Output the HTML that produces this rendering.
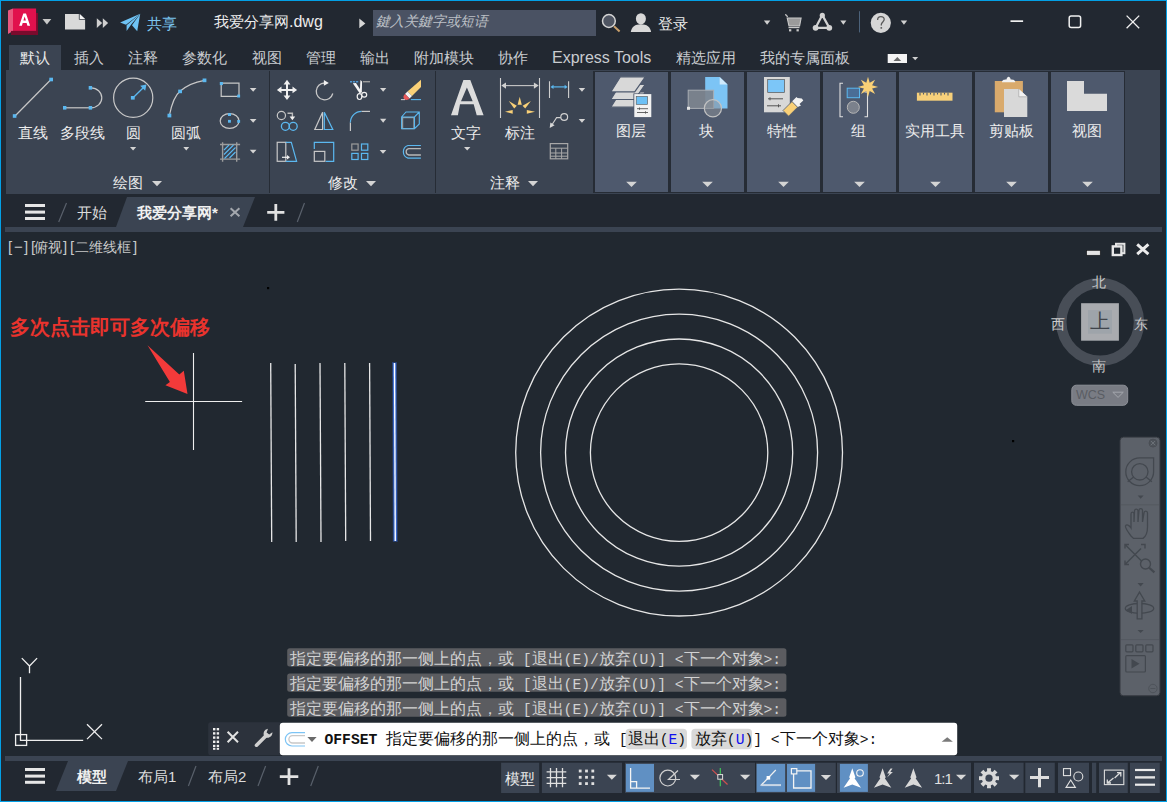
<!DOCTYPE html>
<html><head><meta charset="utf-8">
<style>
*{margin:0;padding:0;box-sizing:border-box}
html,body{width:1167px;height:802px;overflow:hidden}
body{position:relative;background:#222831;font-family:"Liberation Sans",sans-serif;color:#e6e6e6}
.a{position:absolute}
.t{position:absolute;white-space:nowrap;line-height:1}
svg{position:absolute;overflow:visible}
.m{font-family:"Liberation Mono",monospace;font-size:14.67px}
</style></head><body>

<!-- ===== Title bar ===== -->
<div class="t" style="left:214px;top:14px;font-size:15px;color:#ececec;width:108.8px;text-align:justify;text-align-last:justify">我爱分享网<span style="font-size:16px">.dwg</span></div>
<div class="a" style="left:373px;top:10px;width:223px;height:26px;background:#4a5263"></div>
<div class="t" style="left:376px;top:14px;font-size:14px;color:#bcc0c6;font-style:italic;width:112.0px;text-align:justify;text-align-last:justify">鍵入关鍵字或短语</div>
<div class="t" style="left:147px;top:16px;font-size:15px;color:#7cc6f0;width:30.0px;text-align:justify;text-align-last:justify">共享</div>
<div class="t" style="left:658px;top:16px;font-size:15px;color:#ececec;width:30.0px;text-align:justify;text-align-last:justify">登录</div>

<!-- title icons -->
<svg style="left:0;top:0" width="1167" height="45">
  <polygon points="8,10.5 13,8.5 13,31 8,34" fill="#e9587f"/>
  <polygon points="11.2,31 37.9,31 37.9,13 36.1,13 36.1,31 11.2,31 11.2,35 37.9,35" fill="#7a0b2d"/>
  <rect x="11.2" y="30.9" width="26.7" height="4" fill="#7a0b2d"/>
  <rect x="36" y="13" width="1.9" height="22" fill="#7a0b2d"/>
  <rect x="13" y="8.5" width="23.1" height="22.4" fill="#e1114d"/>
  <path d="M19.2,25.7 L23.3,13.5 L26,13.5 L30.1,25.7 L27.4,25.7 L26.6,23 L22.7,23 L21.9,25.7 Z M23.4,20.6 L25.9,20.6 L24.65,16.6 Z" fill="#fff"/>
  <polygon points="42.5,19 51.3,19 46.9,24.4" fill="#c8c8c8"/>
  <path d="M65,14 L79.3,14 L85.1,19.5 L85.1,29.5 L65,29.5 Z" fill="#d9d9d9"/>
  <path d="M79.8,14 L85.1,19 L79.8,19 Z" fill="#f4f4f4"/>
  <path d="M79.3,14 L79.3,19.5 L85.1,19.5" fill="none" stroke="#3a3f48" stroke-width="0.8"/>
  <polygon points="96.8,18.2 102.2,23.1 96.8,28" fill="#cfcfcf"/>
  <polygon points="102.8,18.2 108.1,23.1 102.8,28" fill="#cfcfcf"/>
  <path d="M140.2,13.8 L120.1,22.6 L126,24.8 Z" fill="#6ec3f5"/>
  <path d="M140.2,13.8 L126.6,25.2 L126.6,31 L131.2,24.6 Z" fill="#6ec3f5"/>
  <path d="M140.2,13.8 L132,25.2 L137.2,31.2 Z" fill="#6ec3f5"/>
  <polygon points="359.3,18.5 365.4,23.4 359.3,28.3" fill="#d6d6d6"/>
  <circle cx="608.9" cy="21" r="6.4" fill="#4f5562" stroke="#d4d4d4" stroke-width="1.5"/>
  <line x1="614" y1="26.2" x2="619.6" y2="31.4" stroke="#c9a06c" stroke-width="2"/>
  <ellipse cx="640.9" cy="18.8" rx="5" ry="5.6" fill="#d8d8d8"/>
  <path d="M630.8,32 C631.5,27 635,24.3 640.9,24.3 C646.8,24.3 650.4,27 651.1,32 Z" fill="#d8d8d8"/>
  <polygon points="763.9,20.6 770.3,20.6 767.1,24.7" fill="#d0d0d0"/>
  <path d="M785,14.6 C786.2,14.6 787,15.4 787.5,17" fill="none" stroke="#c9c9c9" stroke-width="1.3"/>
  <path d="M787.2,18 L801.1,18 L799.6,26 L789,26 Z" fill="#9b9b9b" stroke="#c9c9c9" stroke-width="1.1"/>
  <line x1="788.5" y1="27.6" x2="799.5" y2="27.6" stroke="#c9c9c9" stroke-width="1.2"/>
  <rect x="789" y="29.2" width="2.3" height="2.2" fill="#c9c9c9"/>
  <rect x="796.5" y="29.2" width="2.3" height="2.2" fill="#c9c9c9"/>
  <path d="M822.3,15.1 L815.5,27.9 L829.4,27.9 Z" fill="none" stroke="#d2d2d2" stroke-width="2.2" stroke-linejoin="round"/>
  <circle cx="822.3" cy="15.4" r="2.6" fill="#d2d2d2"/>
  <circle cx="815.6" cy="27.8" r="2.9" fill="#d2d2d2"/>
  <circle cx="829.3" cy="27.8" r="2.9" fill="#d2d2d2"/>
  <polygon points="840.3,20.6 846.4,20.6 843.35,24.7" fill="#d0d0d0"/>
  <rect x="859" y="11.2" width="1" height="21.2" fill="#4c627a"/>
  <circle cx="880.8" cy="22.8" r="10.1" fill="#d6d6d6"/>
  <path d="M877.6,20.1 C877.6,17.8 879,16.6 880.9,16.6 C882.9,16.6 884.2,17.8 884.2,19.6 C884.2,21.7 881.3,22.3 881.3,24.6 L881.3,25.4" fill="none" stroke="#5a5a5a" stroke-width="1.3"/>
  <rect x="880.5" y="27.1" width="1.6" height="1.6" fill="#5a5a5a"/>
  <polygon points="900.7,20.6 907.2,20.6 903.95,24.7" fill="#d0d0d0"/>
  <rect x="1010.5" y="20.3" width="12.6" height="1.7" fill="#f0f0f0"/>
  <rect x="1069.2" y="16" width="11.4" height="11.5" rx="2" fill="none" stroke="#f0f0f0" stroke-width="1.5"/>
  <path d="M1126.6,15.6 L1139.2,28.2 M1139.2,15.6 L1126.6,28.2" stroke="#f0f0f0" stroke-width="1.3"/>
</svg>

<!-- ===== Ribbon tabs ===== -->
<div class="a" style="left:9px;top:45px;width:52px;height:25px;background:#3b4452"></div>
<div class="t" style="left:20px;top:50px;font-size:15px;color:#e8e8e8;width:30.0px;text-align:justify;text-align-last:justify">默认</div>
<div class="t" style="left:74px;top:50px;font-size:15px;color:#c9ccd0;width:30.0px;text-align:justify;text-align-last:justify">插入</div>
<div class="t" style="left:128px;top:50px;font-size:15px;color:#c9ccd0;width:30.0px;text-align:justify;text-align-last:justify">注释</div>
<div class="t" style="left:182px;top:50px;font-size:15px;color:#c9ccd0;width:45.0px;text-align:justify;text-align-last:justify">参数化</div>
<div class="t" style="left:252px;top:50px;font-size:15px;color:#c9ccd0;width:30.0px;text-align:justify;text-align-last:justify">视图</div>
<div class="t" style="left:306px;top:50px;font-size:15px;color:#c9ccd0;width:30.0px;text-align:justify;text-align-last:justify">管理</div>
<div class="t" style="left:360px;top:50px;font-size:15px;color:#c9ccd0;width:30.0px;text-align:justify;text-align-last:justify">输出</div>
<div class="t" style="left:414px;top:50px;font-size:15px;color:#c9ccd0;width:60.0px;text-align:justify;text-align-last:justify">附加模块</div>
<div class="t" style="left:498px;top:50px;font-size:15px;color:#c9ccd0;width:30.0px;text-align:justify;text-align-last:justify">协作</div>
<div class="t" style="left:552px;top:50px;font-size:16px;color:#c9ccd0">Express Tools</div>
<div class="t" style="left:676px;top:50px;font-size:15px;color:#c9ccd0;width:60.0px;text-align:justify;text-align-last:justify">精选应用</div>
<div class="t" style="left:760px;top:50px;font-size:15px;color:#c9ccd0;width:90.0px;text-align:justify;text-align-last:justify">我的专属面板</div>

<!-- ===== Ribbon panel ===== -->
<div class="a" style="left:6px;top:70px;width:1154px;height:124px;background:#3b4452"></div>
<div class="a" style="left:269px;top:71px;width:1px;height:122px;background:#262c35"></div>
<div class="a" style="left:435px;top:71px;width:1px;height:122px;background:#262c35"></div>
<div class="a" style="left:593px;top:71px;width:532px;height:122px;background:#262c35"></div>
<div class="a" style="left:595px;top:72px;width:73px;height:120px;background:#4e596d"></div>
<div class="a" style="left:671px;top:72px;width:73px;height:120px;background:#4e596d"></div>
<div class="a" style="left:747px;top:72px;width:73px;height:120px;background:#4e596d"></div>
<div class="a" style="left:823px;top:72px;width:73px;height:120px;background:#4e596d"></div>
<div class="a" style="left:899px;top:72px;width:73px;height:120px;background:#4e596d"></div>
<div class="a" style="left:975px;top:72px;width:73px;height:120px;background:#4e596d"></div>
<div class="a" style="left:1051px;top:72px;width:73px;height:120px;background:#4e596d"></div>

<!-- panel labels -->
<div class="t" style="left:18px;top:125px;font-size:15px;color:#ececec;width:30.0px;text-align:justify;text-align-last:justify">直线</div>
<div class="t" style="left:60px;top:125px;font-size:15px;color:#ececec;width:45.0px;text-align:justify;text-align-last:justify">多段线</div>
<div class="t" style="left:126px;top:125px;font-size:15px;color:#ececec;width:15.0px;text-align:center">圆</div>
<div class="t" style="left:171px;top:125px;font-size:15px;color:#ececec;width:30.0px;text-align:justify;text-align-last:justify">圆弧</div>
<div class="t" style="left:113px;top:175px;font-size:15px;color:#ececec;width:30.0px;text-align:justify;text-align-last:justify">绘图</div>
<div class="t" style="left:328px;top:175px;font-size:15px;color:#ececec;width:30.0px;text-align:justify;text-align-last:justify">修改</div>
<div class="t" style="left:451px;top:125px;font-size:15px;color:#ececec;width:30.0px;text-align:justify;text-align-last:justify">文字</div>
<div class="t" style="left:505px;top:125px;font-size:15px;color:#ececec;width:30.0px;text-align:justify;text-align-last:justify">标注</div>
<div class="t" style="left:490px;top:175px;font-size:15px;color:#ececec;width:30.0px;text-align:justify;text-align-last:justify">注释</div>
<div class="t" style="left:616px;top:123px;font-size:15px;color:#ececec;width:30.0px;text-align:justify;text-align-last:justify">图层</div>
<div class="t" style="left:699px;top:123px;font-size:15px;color:#ececec;width:15.0px;text-align:center">块</div>
<div class="t" style="left:767px;top:123px;font-size:15px;color:#ececec;width:30.0px;text-align:justify;text-align-last:justify">特性</div>
<div class="t" style="left:851px;top:123px;font-size:15px;color:#ececec;width:15.0px;text-align:center">组</div>
<div class="t" style="left:905px;top:123px;font-size:15px;color:#ececec;width:60.0px;text-align:justify;text-align-last:justify">实用工具</div>
<div class="t" style="left:989px;top:123px;font-size:15px;color:#ececec;width:45.0px;text-align:justify;text-align-last:justify">剪贴板</div>
<div class="t" style="left:1072px;top:123px;font-size:15px;color:#ececec;width:30.0px;text-align:justify;text-align-last:justify">视图</div>

<!-- ribbon icons -->
<svg style="left:0;top:0" width="1167" height="200">
  <!-- tab icon -->
  <rect x="887.7" y="54" width="19.3" height="9" fill="#f4f4f4"/>
  <polygon points="893.5,61 901.2,61 897.35,57" fill="#6a6a6a"/>
  <polygon points="912.2,57 918.2,57 915.2,60.3" fill="#d0d0d0"/>
  <!-- line -->
  <line x1="15" y1="116" x2="51" y2="79.5" stroke="#c8c8c8" stroke-width="1.2"/>
  <rect x="12.8" y="114.2" width="3.6" height="3.6" fill="#5bb8f0"/>
  <rect x="49.3" y="77.7" width="3.7" height="3.6" fill="#5bb8f0"/>
  <!-- polyline -->
  <line x1="65" y1="107.8" x2="90" y2="107.8" stroke="#c8c8c8" stroke-width="1.2"/>
  <path d="M91,87.8 A10.8,10 0 0 1 91,107.8" fill="none" stroke="#c8c8c8" stroke-width="1.2"/>
  <rect x="63" y="106" width="3.4" height="3.6" fill="#5bb8f0"/>
  <rect x="88.7" y="106" width="3.4" height="3.6" fill="#5bb8f0"/>
  <rect x="88.7" y="86" width="3.4" height="3.6" fill="#5bb8f0"/>
  <!-- circle -->
  <circle cx="133.2" cy="97.8" r="19.6" fill="none" stroke="#c8c8c8" stroke-width="1.2"/>
  <line x1="133" y1="97.8" x2="143.5" y2="87.5" stroke="#5bb8f0" stroke-width="1.3"/>
  <polygon points="146.4,84.6 145.2,90.8 140.2,85.8" fill="#5bb8f0"/>
  <rect x="130.9" y="96" width="3.8" height="3.6" fill="#5bb8f0"/>
  <!-- arc -->
  <path d="M169.4,115.5 Q173,97 180,91.3 Q189,83 204.5,80.3" fill="none" stroke="#c8c8c8" stroke-width="1.2"/>
  <rect x="167.5" y="113.7" width="3.8" height="3.7" fill="#5bb8f0"/>
  <rect x="178.2" y="89.6" width="3.8" height="3.6" fill="#5bb8f0"/>
  <rect x="202.6" y="78.5" width="3.8" height="3.7" fill="#5bb8f0"/>
  <!-- rect -->
  <path d="M221.2,83.2 L239,83.2 L239,96.4 L221.2,96.4 Z" fill="none" stroke="#c8c8c8" stroke-width="1.2"/>
  <rect x="219.8" y="82" width="3.1" height="3.1" fill="#5bb8f0"/>
  <rect x="237.2" y="94.6" width="2.9" height="2.9" fill="#5bb8f0"/>
  <polygon points="249.8,88 256.5,88 253.15,91.8" fill="#d4d4d4"/>
  <!-- ellipse -->
  <ellipse cx="229.6" cy="121" rx="9.4" ry="7.3" fill="none" stroke="#c8c8c8" stroke-width="1.2"/>
  <rect x="228" y="119.9" width="2.9" height="2.8" fill="#5bb8f0"/>
  <rect x="228" y="113.2" width="3" height="2.8" fill="#5bb8f0"/>
  <rect x="237.2" y="120" width="2.9" height="2.8" fill="#5bb8f0"/>
  <polygon points="249.8,119 256.5,119 253.15,122.7" fill="#d4d4d4"/>
  <!-- hatch -->
  <path d="M222.6,142.2 V161.7 M236.7,142.2 V161.7 M220,144.5 H240.1 M220,159.1 H240.1" stroke="#9c9c9c" stroke-width="1.4"/>
  <path d="M224,150 L229,145 M224,154.5 L233.5,145 M224.5,158.5 L235.5,147.5 M229.5,158 L235.5,152" stroke="#5bb8f0" stroke-width="1.1"/>
  <polygon points="249.8,149.7 256.5,149.7 253.15,153.4" fill="#d4d4d4"/>
  <!-- draw labels dropdowns -->
  <polygon points="130,147 136.2,147 133.1,150.4" fill="#d4d4d4"/>
  <polygon points="183.3,147 189.2,147 186.25,150.4" fill="#d4d4d4"/>
  <polygon points="152,181 162,181 157.0,186.3" fill="#d4d4d4"/>
  <!-- modify: move -->
  <path d="M287,79.8 L290.4,84.4 L288,84.4 L288,88.9 L292.5,88.9 L292.5,86.5 L297.1,89.9 L292.5,93.3 L292.5,90.9 L288,90.9 L288,95.4 L290.4,95.4 L287,100 L283.6,95.4 L286,95.4 L286,90.9 L281.5,90.9 L281.5,93.3 L276.9,89.9 L281.5,86.5 L281.5,88.9 L286,88.9 L286,84.4 L283.6,84.4 Z" fill="#f0f0f0"/>
  <!-- rotate -->
  <path d="M324.5,83 A8.4,8.4 0 1 0 332.8,93.5" fill="none" stroke="#c8c8c8" stroke-width="1.3"/>
  <polygon points="323.9,80 328.8,83 323.9,85.8" fill="#f0f0f0"/>
  <!-- trim -->
  <path d="M350,81.7 H359" stroke="#4d95cf" stroke-width="1.4" stroke-dasharray="2.2,0.8"/>
  <path d="M363,81.7 H370" stroke="#9c9c9c" stroke-width="1.4"/>
  <path d="M352.8,83.2 L356,83 L361.6,91.8 L359.8,93.6 Z" fill="#f4f4f4"/><path d="M360.4,80 L362.1,81.6 L361.8,92.6 L359.8,92.4 Z" fill="#f4f4f4"/>
  <ellipse cx="359.5" cy="96.6" rx="2.3" ry="2.9" fill="none" stroke="#f0f0f0" stroke-width="1.2"/>
  <ellipse cx="364.2" cy="94.8" rx="2.5" ry="2.4" fill="none" stroke="#f0f0f0" stroke-width="1.2"/>
  <polygon points="380,88 386.3,88 383.15,91.8" fill="#d4d4d4"/>
  <!-- erase -->
  <path d="M421,79.8 L421,87 L412,96 L407.5,91.5 Z" fill="#f9d077"/>
  <path d="M407.5,91.5 L412,96 L409.5,98.5 L405,94 Z" fill="#f4f4f4"/>
  <path d="M405,94 L409.5,98.5 C408,100.3 405.5,100.3 404.3,99 C403,97.7 403.2,95.5 405,94 Z" fill="#ec5a5a"/>
  <path d="M400.9,99.6 H405.1" stroke="#c8c8c8" stroke-width="1.1"/>
  <path d="M410.9,99.6 H421" stroke="#5bb8f0" stroke-width="1.1"/>
  <!-- copy -->
  <circle cx="281.4" cy="115.5" r="4.1" fill="none" stroke="#c8c8c8" stroke-width="1.2"/>
  <path d="M287.5,113.2 H292.4 V117" fill="none" stroke="#bcbcbc" stroke-width="1.4"/>
  <polygon points="289.6,116.5 295.2,116.5 292.4,120.3" fill="#f0f0f0"/>
  <circle cx="285.4" cy="126.3" r="4" fill="none" stroke="#5bb8f0" stroke-width="1.3"/>
  <circle cx="293.2" cy="126.3" r="4" fill="none" stroke="#5bb8f0" stroke-width="1.3"/>
  <!-- mirror -->
  <path d="M322.6,112.3 L322.6,129.5 L314.8,129.5 Z" fill="none" stroke="#c8c8c8" stroke-width="1.2"/>
  <path d="M324.3,112.3 L324.3,129.5 L332.8,129.5 Z" fill="none" stroke="#5bb8f0" stroke-width="1.2"/>
  <!-- fillet -->
  <path d="M350.4,131 V122.6" stroke="#c8c8c8" stroke-width="1.2"/>
  <path d="M350.4,122.6 A11.2,11.2 0 0 1 361.6,111.4" fill="none" stroke="#5bb8f0" stroke-width="1.2"/>
  <path d="M361.6,111.4 H370" stroke="#c8c8c8" stroke-width="1.2"/>
  <polygon points="380,118.7 386.3,118.7 383.15,122.7" fill="#d4d4d4"/>
  <!-- 3d box -->
  <rect x="402.6" y="117.6" width="11.3" height="11" fill="none" stroke="#9c9c9c" stroke-width="1.2"/>
  <path d="M401.6,128.7 V117 L406,112 H419.3 V124 L414.5,128.7 Z M401.6,117 H414.5 L419.3,112 M414.5,117 V128.7" fill="none" stroke="#5bb8f0" stroke-width="1.1"/>
  <!-- stretch -->
  <rect x="277.2" y="142.3" width="8.6" height="19" fill="none" stroke="#c8c8c8" stroke-width="1.2"/>
  <path d="M285.8,142.3 H291.3 L296.6,161.3 H285.8" fill="none" stroke="#5bb8f0" stroke-width="1.2"/>
  <path d="M282,157.3 H287.5" stroke="#f0f0f0" stroke-width="1.2"/>
  <polygon points="287,155 290,157.3 287,159.6" fill="#f0f0f0"/>
  <!-- scale -->
  <path d="M314.3,149 V142.3 H333.7 V161.3 H325.6" fill="none" stroke="#5bb8f0" stroke-width="1.2"/>
  <rect x="314.3" y="151.4" width="10.5" height="9.9" fill="none" stroke="#c8c8c8" stroke-width="1.2"/>
  <!-- array -->
  <rect x="351.8" y="144" width="6.3" height="6.2" fill="none" stroke="#9c9c9c" stroke-width="1.2"/>
  <rect x="361.5" y="144" width="6.3" height="6.2" fill="none" stroke="#5bb8f0" stroke-width="1.2"/>
  <rect x="351.8" y="153.4" width="6.3" height="6.1" fill="none" stroke="#5bb8f0" stroke-width="1.2"/>
  <rect x="361.5" y="153.4" width="6.3" height="6.1" fill="none" stroke="#5bb8f0" stroke-width="1.2"/>
  <polygon points="379.7,150.1 386.3,150.1 383.0,153.8" fill="#d4d4d4"/>
  <!-- offset -->
  <path d="M420.9,145.5 H408 A6.6,6.6 0 0 0 408,158.1 H420.9" fill="none" stroke="#5bb8f0" stroke-width="1.2"/>
  <path d="M420.9,148.7 H408.8 A3.2,3.2 0 0 0 408.8,155 H420.9" fill="none" stroke="#b8b8b8" stroke-width="1.3"/>
  <polygon points="366,181 376,181 371.0,186.3" fill="#d4d4d4"/>
  <!-- annotation: A -->
  <path d="M451,115.3 L463.4,80 L470.3,80 L483.6,115.3 L476.7,115.3 L473.7,104.2 L460,104.2 L457.9,115.3 Z M461,101.3 L472.7,101.3 L466.9,87.6 Z" fill="#dcdcdc" fill-rule="evenodd"/>
  <polygon points="464,147 470.4,147 467.2,150.4" fill="#d4d4d4"/>
  <!-- dimension -->
  <path d="M500.5,77.9 V118.1 M539.5,77.9 V118.1" stroke="#d0d0d0" stroke-width="1.1"/>
  <path d="M505,85.6 H535" stroke="#c8c8c8" stroke-width="1.1"/>
  <polygon points="501.3,85.6 506,82.6 506,88.8" fill="#d0d0d0"/>
  <polygon points="538.7,85.6 533.9,82.6 533.9,88.8" fill="#d0d0d0"/>
  <polygon points="519.7,96.8 521.8,104.8 517.6,104.8" fill="#f9d077"/>
  <polygon points="508.8,101 516.8,105.8 514.2,108.4" fill="#f9d077"/>
  <polygon points="530.9,101 525.2,108.4 522.6,105.8" fill="#f9d077"/>
  <polygon points="505,111.8 512.7,109.9 512.7,113.8" fill="#f9d077"/>
  <polygon points="535,111.8 526.8,109.9 526.8,113.8" fill="#f9d077"/>
  <!-- linear -->
  <path d="M549.5,81.3 V98.1 M568.6,81.3 V98.1" stroke="#d0d0d0" stroke-width="1.1"/>
  <path d="M552.5,86.9 H565.6" stroke="#5bb8f0" stroke-width="1.2"/>
  <polygon points="550.5,86.9 553.5,84.8 553.5,89" fill="#5bb8f0"/>
  <polygon points="567.6,86.9 564.6,84.8 564.6,89" fill="#5bb8f0"/>
  <polygon points="578.7,88 585.2,88 581.95,91.7" fill="#d4d4d4"/>
  <!-- leader -->
  <circle cx="564.2" cy="117" r="3.4" fill="none" stroke="#d0d0d0" stroke-width="1.2"/>
  <path d="M560.8,117.6 H556.6 L551.8,125" fill="none" stroke="#d0d0d0" stroke-width="1.1"/>
  <polygon points="549.7,128 550.4,122.5 554.6,125.3" fill="#d8d8d8"/>
  <polygon points="578.7,118.9 585.2,118.9 581.95,122.8" fill="#d4d4d4"/>
  <!-- table -->
  <rect x="550.3" y="143.6" width="17.4" height="15.2" fill="none" stroke="#a8a8a8" stroke-width="1.2"/>
  <path d="M550.3,148.2 H567.7 M550.3,153 H567.7 M550.3,156.2 H567.7 M555.8,148.2 V158.8 M561.6,148.2 V158.8" stroke="#a8a8a8" stroke-width="1"/>
  <polygon points="528,181 538,181 533.0,186.3" fill="#d4d4d4"/>
  <!-- layers -->
  <polygon points="610.8,107.2 620.4,92 645.3,92 634.7,107.2" fill="#d8d8d8" stroke="#4e596d" stroke-width="1.2"/>
  <polygon points="610.8,99.5 620.4,84.3 645.3,84.3 634.7,99.5" fill="#d8d8d8" stroke="#4e596d" stroke-width="1.2"/>
  <polygon points="610.8,91.9 620.4,76.8 645.3,76.8 634.7,91.9" fill="#d8d8d8" stroke="#4e596d" stroke-width="1.2"/>
  <rect x="633.4" y="93.4" width="18.3" height="24" fill="#4e596d"/>
  <rect x="634.3" y="94.1" width="17" height="23" fill="#f2f2f2"/>
  <rect x="636.2" y="96.4" width="11.4" height="8" fill="#6cc0f5" stroke="#555" stroke-width="0.6"/>
  <path d="M637,108.7 H648 M637,112.5 H648 M639.5,107.5 V109.8 M645.5,111.3 V113.6" stroke="#555" stroke-width="0.9"/>
  <!-- block -->
  <path d="M705.2,76.9 H719.7 L727.5,84.5 V108.4 H705.2 Z" fill="#7cc4f5"/>
  <path d="M719.7,76.9 V84.5 H727.5 Z" fill="#cfe9fb"/>
  <rect x="688.2" y="90.2" width="25.4" height="18.2" fill="#7d848f" fill-opacity="0.92" stroke="#a9adb3" stroke-width="1"/>
  <circle cx="712.9" cy="108.3" r="8.6" fill="#8a8f98" fill-opacity="0.55" stroke="#c2c2c2" stroke-width="1.2"/>
  <rect x="687" y="106.8" width="3" height="3" fill="#e6e6e6"/>
  <!-- properties -->
  <rect x="764" y="77" width="25.8" height="35.3" fill="#d8d8d8"/>
  <rect x="767.7" y="79.6" width="16.7" height="12.8" fill="#7cc6f8" stroke="#555" stroke-width="0.7"/>
  <path d="M768,98.8 H783 M767,105.8 H781 M770,97.3 V100.3 M778.5,104.3 V107.3" stroke="#555" stroke-width="1"/>
  <path d="M783,110.5 L792,101.5 L797.6,107.2 L788.6,116.2 Z" fill="#f9d077" stroke="#4e596d" stroke-width="0.8"/>
  <path d="M792.2,101.3 L796.5,97 L797.5,98 L801.8,98.6 L803.3,100.4 L799.5,104 L801,105.5 L797.8,107 Z" fill="#f2f2f2"/>
  <!-- group -->
  <path d="M843,83.2 H840 V116.7 H843 M864.5,92 H867.5 V116.7 H864.5" fill="none" stroke="#e0e0e0" stroke-width="1.1"/>
  <rect x="847.2" y="88.2" width="12.3" height="9.5" fill="#4a6d96" stroke="#5bb8f0" stroke-width="1"/>
  <circle cx="853.3" cy="107.3" r="6" fill="#7b818c" stroke="#b5b5b5" stroke-width="1"/>
  <polygon points="868,76.8 869.7,82.8 875.1,79.8 872.1,85.2 878.1,86.9 872.1,88.6 875.1,94 869.7,91 868,97 866.3,91 860.9,94 863.9,88.6 857.9,86.9 863.9,85.2 860.9,79.8 866.3,82.8" fill="#f9d077"/>
  <!-- ruler -->
  <rect x="916.9" y="92.7" width="35.6" height="8" fill="#f7d07a"/>
  <path d="M920,92.7 V95.6 M923.5,92.7 V94.6 M927,92.7 V95.6 M930.5,92.7 V94.6 M934,92.7 V95.6 M937.5,92.7 V94.6 M941,92.7 V95.6 M944.5,92.7 V94.6 M948,92.7 V95.6" stroke="#4e596d" stroke-width="1.1"/>
  <!-- clipboard -->
  <rect x="994.8" y="81" width="28.1" height="31.3" fill="#d9aa6c"/>
  <path d="M1002,82.3 C1002,79.5 1005,79.5 1006.5,79.5 C1006.8,77.5 1007.8,76.7 1008.6,76.7 C1009.4,76.7 1010.4,77.5 1010.7,79.5 C1012.2,79.5 1015.2,79.5 1015.2,82.3 Z" fill="#f2f2f2"/>
  <path d="M1004,89 H1018.8 L1027.3,96.8 V117.1 H1004 Z" fill="#d8d8d8" stroke="#4e596d" stroke-width="0"/>
  <path d="M1018.8,89 V96.8 H1027.3 Z" fill="#f2f2f2"/>
  <path d="M1018.8,89 V96.8 H1027.3" fill="none" stroke="#9a9a9a" stroke-width="0.6"/>
  <!-- view L -->
  <path d="M1067,81.1 H1084 V93.8 H1107 V110.9 H1067 Z" fill="#dadada"/>
  <!-- large button dropdowns -->
  <polygon points="626.2,181.7 636.8,181.7 631.5,187.1" fill="#d4d4d4"/>
  <polygon points="702.2,181.7 712.8,181.7 707.5,187.1" fill="#d4d4d4"/>
  <polygon points="778.2,181.7 788.8,181.7 783.5,187.1" fill="#d4d4d4"/>
  <polygon points="854.2,181.7 864.8,181.7 859.5,187.1" fill="#d4d4d4"/>
  <polygon points="930.2,181.7 940.8,181.7 935.5,187.1" fill="#d4d4d4"/>
  <polygon points="1006.2,181.7 1016.8,181.7 1011.5,187.1" fill="#d4d4d4"/>
  <polygon points="1082.2,181.7 1092.8,181.7 1087.5,187.1" fill="#d4d4d4"/>
</svg>

<!-- ===== File tab bar ===== -->
<svg style="left:0;top:0" width="1167" height="802">
  <polygon points="116,227 127,197 255,197 243,227" fill="#3b4452"/>
</svg>
<div class="t" style="left:77px;top:205px;font-size:15px;color:#dcdcdc;width:30.0px;text-align:justify;text-align-last:justify">开始</div>
<div class="t" style="left:137px;top:205px;font-size:15px;color:#f0f0f0;font-weight:bold;width:80.85px;text-align:justify;text-align-last:justify">我爱分享网*</div>
<div class="a" style="left:5px;top:227px;width:1157px;height:5px;background:#3b4452"></div>

<!-- ===== Drawing area ===== -->
<div class="a" style="left:1px;top:232px;width:1165px;height:524px;background:#212830"></div>
<div class="t" style="left:8px;top:239px;font-size:15px;color:#c8c8c8">[</div><div class="t" style="left:14px;top:239px;font-size:15px;color:#c8c8c8">−</div><div class="t" style="left:24px;top:239px;font-size:15px;color:#c8c8c8">]</div><div class="t" style="left:31px;top:239px;font-size:15px;color:#c8c8c8">[</div><div class="t" style="left:34px;top:240px;font-size:14px;color:#c8c8c8;width:28.0px;text-align:justify;text-align-last:justify">俯视</div><div class="t" style="left:63px;top:239px;font-size:15px;color:#c8c8c8">]</div><div class="t" style="left:70px;top:239px;font-size:15px;color:#c8c8c8">[</div><div class="t" style="left:75px;top:240px;font-size:14px;color:#c8c8c8;width:56.0px;text-align:justify;text-align-last:justify">二维线框</div><div class="t" style="left:133px;top:239px;font-size:15px;color:#c8c8c8">]</div>
<div class="t" style="left:10px;top:317px;font-size:20px;color:#e9332d;font-weight:900;width:200.0px;text-align:justify;text-align-last:justify">多次点击即可多次偏移</div>

<!-- drawing svg -->
<svg style="left:0;top:0" width="1167" height="802">
  <!-- file tab bar icons -->
  <rect x="25" y="204" width="20" height="3" fill="#e6e6e6"/>
  <rect x="25" y="210.6" width="20" height="3" fill="#e6e6e6"/>
  <rect x="25" y="217" width="20" height="3" fill="#e6e6e6"/>
  <line x1="66.5" y1="203" x2="58.7" y2="222" stroke="#5a616c" stroke-width="1.2"/>
  <path d="M230.6,208.2 L239.4,216.2 M239.4,208.2 L230.6,216.2" stroke="#a3a7ad" stroke-width="2"/>
  <path d="M267.2,212.4 H284.4 M275.8,204 V220.8" stroke="#e2e2e2" stroke-width="2.8"/>
  <line x1="304.5" y1="203" x2="297.3" y2="222" stroke="#5a616c" stroke-width="1.2"/>
  <!-- viewport controls -->
  <rect x="1086.7" y="250.5" width="13.5" height="4.7" fill="#e4e4e4" stroke="#111" stroke-width="0.5"/>
  <rect x="1116" y="243.8" width="8.4" height="9.4" fill="none" stroke="#e4e4e4" stroke-width="2"/>
  <rect x="1112.8" y="246.4" width="8.6" height="8.6" fill="#212830" stroke="#e8e8e8" stroke-width="2.4"/>
  <path d="M1137.2,244.4 L1148.4,254.1 M1148.4,244.4 L1137.2,254.1" stroke="#ececec" stroke-width="3"/>
  <!-- dots -->
  <rect x="267" y="287" width="2.2" height="2.2" fill="#000"/>
  <rect x="1012" y="440" width="2.2" height="2.2" fill="#000"/>
  <!-- arrow -->
  <polygon points="147.5,345.2 179.3,374.4 183.8,370.7 187.5,393.9 165.4,385.3 169.9,381.9" fill="#f23a3a"/>
  <!-- crosshair -->
  <path d="M193.5,353 V450 M145.2,401.5 H242.1" stroke="#eeeeee" stroke-width="1.1"/>
  <!-- lines -->
  <g stroke="#e6e6e6" stroke-width="1.3">
    <line x1="270.7" y1="363" x2="271.7" y2="542"/>
    <line x1="295.2" y1="364" x2="296.2" y2="542"/>
    <line x1="320" y1="363" x2="321" y2="542"/>
    <line x1="344.8" y1="363" x2="345.7" y2="541"/>
    <line x1="369.6" y1="363" x2="370.5" y2="541"/>
  </g>
  <line x1="394.5" y1="362" x2="395.3" y2="542" stroke="#2a4f9c" stroke-width="5" stroke-opacity="0.6"/><line x1="394.5" y1="363" x2="395.3" y2="541" stroke="#3f6fd4" stroke-width="3.2"/>
  <line x1="394.5" y1="363" x2="395.3" y2="541" stroke="#ffffff" stroke-width="1.3"/>
  <!-- circles -->
  <g fill="none" stroke="#e6e6e6" stroke-width="1.3">
    <circle cx="679.1" cy="452.6" r="88.7"/>
    <circle cx="679.1" cy="452.6" r="113.6"/>
    <circle cx="679.1" cy="452.6" r="138.5"/>
    <circle cx="679.1" cy="452.6" r="163.4"/>
  </g>
  <!-- compass -->
  <circle cx="1100.15" cy="322" r="38.8" fill="none" stroke="#484e57" stroke-width="10.4"/>
  <rect x="1081.1" y="303.2" width="37.8" height="37.5" fill="#a9abaf"/>
  <rect x="1088" y="310.1" width="24" height="23.6" fill="#9ea4aa"/>
  <rect x="1071.8" y="385.2" width="55.9" height="20.1" rx="4.5" fill="#797c84" stroke="#8e9198" stroke-width="1"/>
  <polygon points="1112.8,392.2 1123.3,392.2 1118.05,397.4" fill="none" stroke="#a4a7ad" stroke-width="1"/>
  <!-- nav bar -->
  <rect x="1120" y="437.1" width="40" height="258.7" rx="3.5" fill="#5c6169" stroke="#353940" stroke-width="1"/>
  <circle cx="1153" cy="443.1" r="4" fill="#4e535a" stroke="#474b52" stroke-width="0.8"/>
  <path d="M1150.8,440.9 L1155.2,445.3 M1155.2,440.9 L1150.8,445.3" stroke="#6e737a" stroke-width="1"/>
  <path d="M1139.9,457.9 H1153.6 V471.8 A13.9,13.9 0 1 1 1139.9,457.9 Z" fill="none" stroke="#43484f" stroke-width="1.3"/>
  <circle cx="1139.8" cy="471.8" r="8.2" fill="none" stroke="#43484f" stroke-width="1.3"/>
  <path d="M1133.6,477 L1127.7,481.8 M1146,477 L1151.9,481.8" stroke="#43484f" stroke-width="1.3"/>
  <polygon points="1137.7,495.4 1143.6,495.4 1140.65,498.8" fill="#43484f"/>
  <line x1="1121" y1="504.8" x2="1159" y2="504.8" stroke="#545960" stroke-width="1"/>
  <path d="M1131,536 C1128,532 1125,528 1125.5,526 C1126.5,524 1129,525 1131,528 L1131,514 C1131,511.5 1134,511.5 1134,514 L1134,522 L1134.5,511 C1134.5,508.5 1138,508.5 1138,511 L1138,522 L1139,510.5 C1139,508 1142.5,508 1142.5,510.5 L1142.5,522 L1144,513 C1144,510.5 1147.5,510.5 1147.5,513 L1147.5,527 C1147.5,533 1145,537 1143,538.4 L1133.5,538.4 Z" fill="none" stroke="#43484f" stroke-width="1.3"/>
  <path d="M1125,544.5 L1145,564.5 M1125,564.5 L1141,548.5 M1141,544.5 L1145,544.5 L1145,548.5 M1125,560.5 L1125,564.5 L1129,564.5 M1125,548.5 L1125,544.5 L1129,544.5" fill="none" stroke="#43484f" stroke-width="1.4"/>
  <circle cx="1145.5" cy="564" r="5" fill="#5c6169" stroke="#43484f" stroke-width="1.4"/>
  <line x1="1149.2" y1="567.7" x2="1154.4" y2="572.4" stroke="#43484f" stroke-width="2.2"/>
  <polygon points="1137.5,583 1143.7,583 1140.6,586.5" fill="#43484f"/>
  <ellipse cx="1139.5" cy="608.4" rx="14.2" ry="4.9" fill="none" stroke="#43484f" stroke-width="1.3"/>
  <path d="M1137.2,618.9 V601 H1134.3 L1139.5,592.1 L1144.8,601 H1141.9 V618.9 Z" fill="#5c6169" stroke="#43484f" stroke-width="1.3"/>
  <polygon points="1126,610 1132,606 1132,614" fill="#43484f"/>
  <polygon points="1137.5,629.9 1143.7,629.9 1140.6,633.1" fill="#43484f"/>
  <line x1="1121" y1="639.6" x2="1159" y2="639.6" stroke="#545960" stroke-width="1"/>
  <rect x="1125.8" y="644.8" width="7.2" height="7" rx="1" fill="none" stroke="#43484f" stroke-width="1.2"/>
  <rect x="1135.8" y="644.8" width="7.2" height="7" rx="1" fill="none" stroke="#43484f" stroke-width="1.2"/>
  <rect x="1145.8" y="644.8" width="7.2" height="7" rx="1" fill="none" stroke="#43484f" stroke-width="1.2"/>
  <rect x="1125.8" y="655.6" width="19.6" height="16.4" rx="1" fill="none" stroke="#43484f" stroke-width="1.2"/>
  <polygon points="1131.5,659 1131.5,668.5 1139.5,663.75" fill="#43484f"/>
  <circle cx="1152.9" cy="688.5" r="4.2" fill="none" stroke="#4e535a" stroke-width="1"/>
  <path d="M1150.4,688.5 H1155.4" stroke="#4e535a" stroke-width="1"/>
  <!-- UCS -->
  <g stroke="#eeeeee" stroke-width="1.3" fill="none">
    <path d="M21.8,658.1 L29.5,666 L37.1,658.1 M29.5,666 V673.2"/>
    <path d="M20.5,677.1 V740.4 H83.2"/>
    <rect x="15.6" y="734.6" width="11" height="10.8"/>
    <path d="M87,724.2 L102,739.1 M102,724.2 L87,739.1"/>
  </g>
  <!-- command history boxes -->
  <rect x="287.2" y="648.2" width="499.2" height="18.4" rx="2.5" fill="#5b5c60"/>
  <rect x="287.2" y="673.4" width="499.2" height="18.4" rx="2.5" fill="#5b5c60"/>
  <rect x="287.2" y="698.3" width="499.2" height="18.4" rx="2.5" fill="#5b5c60"/>
  <!-- command line -->
  <rect x="208.2" y="722.2" width="75" height="33" rx="2.5" fill="#2c323c"/>
  <rect x="279.8" y="722.8" width="677.4" height="32.4" rx="3" fill="#ffffff"/>
  <g fill="#eeeeee">
    <rect x="213" y="728" width="2.4" height="2.4"/><rect x="216.7" y="728" width="2.4" height="2.4"/>
    <rect x="213" y="732.2" width="2.4" height="2.4"/><rect x="216.7" y="732.2" width="2.4" height="2.4"/>
    <rect x="213" y="736.4" width="2.4" height="2.4"/><rect x="216.7" y="736.4" width="2.4" height="2.4"/>
    <rect x="213" y="740.6" width="2.4" height="2.4"/><rect x="216.7" y="740.6" width="2.4" height="2.4"/>
    <rect x="213" y="744.8" width="2.4" height="2.4"/><rect x="216.7" y="744.8" width="2.4" height="2.4"/>
    <rect x="213" y="748" width="2.4" height="1.8"/><rect x="216.7" y="748" width="2.4" height="1.8"/>
  </g>
  <path d="M227.6,731.8 L238,742.2 M238,731.8 L227.6,742.2" stroke="#e2e2e2" stroke-width="2"/>
  <path d="M256.5,745.2 L266.5,735.2" stroke="#d0d0d0" stroke-width="3.6" stroke-linecap="round"/>
  <path d="M264.5,737 C262.5,733.5 264,729.5 268,728.8 L266.6,732.6 L269.2,734.6 L272.4,732.2 C272.6,736 269.2,738.6 266,737.4 Z" fill="#d0d0d0"/>
  <path d="M305,732.6 H292 A6.7,6.7 0 0 0 292,746 H305" fill="none" stroke="#7cc4f5" stroke-width="1.2"/>
  <path d="M305,735.6 H292.6 A3.7,3.7 0 0 0 292.6,743 H305" fill="none" stroke="#c8c8c8" stroke-width="1.3"/>
  <polygon points="307.4,737 316.6,737 312.0,742" fill="#6a6a6a"/>
  <rect x="625.6" y="728.7" width="61.4" height="20.6" rx="4" fill="#d9d9d9"/>
  <rect x="691.4" y="728.7" width="60.6" height="20.6" rx="4" fill="#d9d9d9"/>
  <polygon points="941.6,741.7 952.9,741.7 947.25,737.3" fill="#7a7a7a"/>
</svg>
<div class="t" style="left:1092px;top:275px;font-size:14px;color:#cacaca;width:14.0px;text-align:center">北</div>
<div class="t" style="left:1051px;top:317px;font-size:14px;color:#cacaca;width:14.0px;text-align:center">西</div>
<div class="t" style="left:1134px;top:317px;font-size:14px;color:#cacaca;width:14.0px;text-align:center">东</div>
<div class="t" style="left:1092px;top:359px;font-size:14px;color:#cacaca;width:14.0px;text-align:center">南</div>
<div class="t" style="left:1090px;top:311px;font-size:20px;color:#40454c;width:20.0px;text-align:center">上</div>
<div class="t" style="left:1076px;top:389px;font-size:12.5px;color:#5a5d63">WCS</div>

<!-- ===== Status bar ===== -->
<div class="a" style="left:5px;top:756px;width:1157px;height:5px;background:#3b4452"></div>
<!-- status bar -->
<svg style="left:0;top:0" width="1167" height="802">
  <rect x="25" y="768" width="20" height="3" fill="#e6e6e6"/>
  <rect x="25" y="774.6" width="20" height="3" fill="#e6e6e6"/>
  <rect x="25" y="780.8" width="20" height="3" fill="#e6e6e6"/>
  <polygon points="56,791 68,761 128,761 116,791" fill="#3b4452"/>
  <g stroke="#59606b" stroke-width="1.2">
    <line x1="196" y1="766" x2="188.4" y2="786"/>
    <line x1="265.6" y1="766" x2="258" y2="786"/>
    <line x1="318.3" y1="766" x2="310.7" y2="786"/>
  </g>
  <path d="M279.8,776.6 H298.3 M289,768.2 V785" stroke="#e2e2e2" stroke-width="2.8"/>
  <!-- boxes -->
  <g fill="#3b4452">
    <rect x="501.1" y="762.7" width="38.1" height="30.3"/>
    <rect x="541.9" y="762.7" width="80.1" height="30.3"/>
    <rect x="625" y="762.7" width="130" height="30.3"/>
    <rect x="756.1" y="762.7" width="79.7" height="30.3"/>
    <rect x="837" y="762.7" width="134" height="30.3"/>
    <rect x="974" y="762.7" width="49.6" height="30.3"/>
    <rect x="1025.3" y="762.7" width="29.5" height="30.3"/>
    <rect x="1058" y="762.7" width="31" height="30.3"/>
    <rect x="1092" y="762.7" width="4.2" height="30.3"/>
    <rect x="1099" y="762.7" width="28.8" height="30.3"/>
    <rect x="1130" y="762.7" width="29.8" height="30.3"/>
  </g>
  <g fill="#6090c3">
    <rect x="625.9" y="763.9" width="28.1" height="28"/>
    <rect x="756.6" y="763.9" width="28.5" height="28"/>
    <rect x="787" y="763.9" width="28.1" height="28"/>
    <rect x="839.9" y="763.9" width="28" height="28"/>
  </g>
  <!-- grid -->
  <path d="M550.5,767.9 V787.2 M556.5,767.9 V787.2 M562.5,767.9 V787.2 M546.6,771.8 H566.3 M546.6,777.6 H566.3 M546.6,783.4 H566.3" stroke="#e0e0e0" stroke-width="1.3"/>
  <g fill="#e0e0e0">
    <rect x="578.8" y="769.6" width="2.8" height="2.8"/><rect x="585.1" y="769.6" width="2.8" height="2.8"/><rect x="591.4" y="769.6" width="2.8" height="2.8"/>
    <rect x="578.8" y="775.9" width="2.8" height="2.8"/><rect x="585.1" y="775.9" width="2.8" height="2.8"/><rect x="591.4" y="775.9" width="2.8" height="2.8"/>
    <rect x="578.8" y="782.2" width="2.8" height="2.8"/><rect x="585.1" y="782.2" width="2.8" height="2.8"/><rect x="591.4" y="782.2" width="2.8" height="2.8"/>
  </g>
  <polygon points="606.9,774.7 616.8,774.7 611.8499999999999,779.8" fill="#d8d8d8"/>
  <!-- ortho -->
  <path d="M630.6,768 V788.2 H650 M630.6,781.6 H636.6 V788.2" fill="none" stroke="#f4f4f4" stroke-width="1.3"/>
  <!-- polar -->
  <circle cx="667.8" cy="778.1" r="7.9" fill="none" stroke="#d0d0d0" stroke-width="1.2"/>
  <path d="M678,770.5 L668.5,779.5 H680" fill="none" stroke="#d0d0d0" stroke-width="1.2"/>
  <polygon points="689.8,774.7 700,774.7 694.9,779.8" fill="#d8d8d8"/>
  <!-- otrack -->
  <line x1="720.3" y1="767.9" x2="720.3" y2="786.2" stroke="#3fc45a" stroke-width="1.2"/>
  <line x1="712" y1="769.6" x2="727.5" y2="784.5" stroke="#d05050" stroke-width="1.2"/>
  <rect x="717.8" y="774.6" width="4.8" height="4.6" fill="#3b4452" stroke="#e0e0e0" stroke-width="1"/>
  <polygon points="740,774.7 750.3,774.7 745.15,779.8" fill="#d8d8d8"/>
  <!-- osnap -->
  <path d="M775.8,770 L761.3,785 H781" fill="none" stroke="#f0f0f0" stroke-width="1.2"/>
  <path d="M761.3,785.2 H781" stroke="#c8d6e6" stroke-width="1.8"/>
  <rect x="766.6" y="776" width="3.6" height="3.6" fill="#fff"/>
  <path d="M796.8,770.8 H811 V788 H793.6 V773.9" fill="none" stroke="#f4f4f4" stroke-width="1.3"/>
  <rect x="791.4" y="768.6" width="5.4" height="5.3" fill="none" stroke="#f4f4f4" stroke-width="1.2"/>
  <polygon points="820.8,775 831.1,775 825.95,780.1" fill="#d8d8d8"/>
  <!-- annotation -->
  <polygon points="852.3,768.2 855.4,777.2 854.6,778.6 856.1,780.6 861.0,787.8 852.3,784.4 843.6,787.8 848.5,780.6 850.0,778.6 849.2,777.2" fill="#ffffff"/>
  <circle cx="860" cy="773" r="3.3" fill="none" stroke="#f4f4f4" stroke-width="1.1"/>
  <polygon points="882.6,768.2 885.7,777.2 884.9,778.6 886.4,780.6 891.3,787.8 882.6,784.4 873.9,787.8 878.8,780.6 880.3,778.6 879.5,777.2" fill="#d9d9d9"/>
  <polygon points="890.5,768.6 887.2,773.6 889.6,773.6 887,777.4 892.9,772 890.3,772 892.5,768.6" fill="#d9d9d9"/>
  <polygon points="913.4,768.2 916.5,777.2 915.7,778.6 917.2,780.6 922.1,787.8 913.4,784.4 904.7,787.8 909.6,780.6 911.1,778.6 910.3,777.2" fill="#d9d9d9"/>
  <polygon points="956,774.7 966.2,774.7 961.1,779.8" fill="#d8d8d8"/>
  <polygon points="995.96,776.35 999.00,776.17 999.00,780.23 995.96,780.05 995.23,781.81 997.50,783.84 994.64,786.70 992.61,784.43 990.85,785.16 991.03,788.20 986.97,788.20 987.15,785.16 985.39,784.43 983.36,786.70 980.50,783.84 982.77,781.81 982.04,780.05 979.00,780.23 979.00,776.17 982.04,776.35 982.77,774.59 980.50,772.56 983.36,769.70 985.39,771.97 987.15,771.24 986.97,768.20 991.03,768.20 990.85,771.24 992.61,771.97 994.64,769.70 997.50,772.56 995.23,774.59" fill="#d8d8d8"/><circle cx="989" cy="778.2" r="3.6" fill="#3b4452"/>
  <polygon points="1009,774.7 1019.4,774.7 1014.2,779.8" fill="#d8d8d8"/>
  <path d="M1030,777.5 H1049 M1039.5,767.9 V787.2" stroke="#dedede" stroke-width="3"/>
  <rect x="1063.5" y="768.6" width="7" height="7" fill="none" stroke="#e0e0e0" stroke-width="1.1"/>
  <circle cx="1078.3" cy="776.5" r="4.5" fill="none" stroke="#e0e0e0" stroke-width="1.1"/>
  <polygon points="1070.7,780 1075.4,787.4 1066,787.4" fill="none" stroke="#e0e0e0" stroke-width="1.1"/>
  <rect x="1104.4" y="770.1" width="19.4" height="14.5" fill="none" stroke="#dcdcdc" stroke-width="1.1"/>
  <path d="M1114.6,778 L1120.5,772.5 M1117,772.6 H1120.8 V776.4 M1113.5,778 L1107.5,783 M1107.3,779.5 V783 H1111" fill="none" stroke="#dcdcdc" stroke-width="1.3"/>
  <rect x="1135" y="768.9" width="20" height="2.2" fill="#ececec"/>
  <rect x="1135" y="776.2" width="20" height="2.4" fill="#e4e4e4"/>
  <rect x="1135" y="783.6" width="20" height="2.2" fill="#ececec"/>
</svg>
<div class="t" style="left:77px;top:769px;font-size:15px;color:#f0f0f0;font-weight:bold;width:30.0px;text-align:justify;text-align-last:justify">模型</div>
<div class="t" style="left:138px;top:769px;font-size:15px;color:#dcdcdc;width:38.35px;text-align:justify;text-align-last:justify">布局1</div>
<div class="t" style="left:208px;top:769px;font-size:15px;color:#dcdcdc;width:38.35px;text-align:justify;text-align-last:justify">布局2</div>
<div class="t" style="left:505px;top:771px;font-size:15px;color:#ececec;width:30.0px;text-align:justify;text-align-last:justify">模型</div>
<div class="t" style="left:934px;top:771px;font-size:15px;color:#e0e0e0;letter-spacing:-1px">1:1</div>

<!-- command history text -->
<div class="t" style="left:290px;top:650px;color:#d2d2d2;font-size:16px;height:17px;line-height:17px;width:491.16px;text-align:justify;text-align-last:justify">指定要偏移的那一侧上的点，或<span class="m"> [</span>退出<span class="m">(E)/</span>放弃<span class="m">(U)] &lt;</span>下一个对象<span class="m">&gt;:</span></div>
<div class="t" style="left:290px;top:675px;color:#d2d2d2;font-size:16px;height:17px;line-height:17px;width:491.16px;text-align:justify;text-align-last:justify">指定要偏移的那一侧上的点，或<span class="m"> [</span>退出<span class="m">(E)/</span>放弃<span class="m">(U)] &lt;</span>下一个对象<span class="m">&gt;:</span></div>
<div class="t" style="left:290px;top:700px;color:#d2d2d2;font-size:16px;height:17px;line-height:17px;width:491.16px;text-align:justify;text-align-last:justify">指定要偏移的那一侧上的点，或<span class="m"> [</span>退出<span class="m">(E)/</span>放弃<span class="m">(U)] &lt;</span>下一个对象<span class="m">&gt;:</span></div>
<div class="t" style="left:324.5px;top:730px;color:#111;font-size:16px;height:17px;line-height:17px;width:552.74px;text-align:justify;text-align-last:justify"><span class="m" style="font-weight:bold">OFFSET </span>指定要偏移的那一侧上的点，或<span class="m"> [</span>退出<span class="m">(<span style="color:#1010ee">E</span>) </span>放弃<span class="m">(<span style="color:#1010ee">U</span>)] &lt;</span>下一个对象<span class="m">&gt;:</span></div>


<div class="a" style="left:0;top:0;width:1167px;height:802px;border:1px solid #03a0e6;pointer-events:none"></div>
</body></html>
